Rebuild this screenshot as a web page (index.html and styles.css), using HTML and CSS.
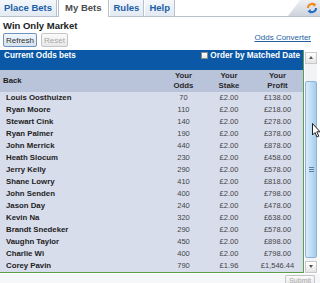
FILE: index.html
```html
<!DOCTYPE html>
<html lang="en">
<head>
    <meta charset="UTF-8">
    <title>My Bets - Win Only Market</title>
    <link rel="stylesheet" href="styles.css">
</head>
<body>
    <div class="tabs">
        <a class="tab" href="#">Place Bets</a>
        <a class="tab active" href="#">My Bets</a>
        <a class="tab" href="#">Rules</a>
        <a class="tab" href="#">Help</a>
        <div class="corner">
            <svg class="reload" width="12" height="12" viewBox="0 0 12 12">
                <path d="M2 6 A4 4 0 0 1 8.5 2.8" fill="none" stroke="#f08a1c" stroke-width="2"/>
                <path d="M7 0.5 L10.5 2.5 L7.5 5 Z" fill="#f08a1c"/>
                <path d="M10 6 A4 4 0 0 1 3.5 9.2" fill="none" stroke="#1d6fc4" stroke-width="2"/>
                <path d="M5 11.5 L1.5 9.5 L4.5 7 Z" fill="#1d6fc4"/>
            </svg>
        </div>
    </div>

    <div class="market">
        <h1>Win Only Market</h1>
        <div class="controls">
            <button class="btn focus">Refresh</button>
            <button class="btn" disabled>Reset</button>
            <a class="converter" href="#">Odds Converter</a>
        </div>
    </div>

    <div class="bets">
        <div class="grid">
            <div class="title">
                <span>Current Odds bets</span>
                <label class="order"><span class="check"></span>Order by Matched Date</label>
            </div>
            <table class="bet-table">
                <thead>
                    <tr>
                        <th class="name">Back</th>
                        <th class="odds">Your<br>Odds</th>
                        <th class="stake">Your<br>Stake</th>
                        <th>Your<br>Profit</th>
                    </tr>
                </thead>
                <tbody>
                    <tr><td class="name">Louis Oosthuizen</td><td>70</td><td>£2.00</td><td>£138.00</td></tr>
                    <tr><td class="name">Ryan Moore</td><td>110</td><td>£2.00</td><td>£218.00</td></tr>
                    <tr><td class="name">Stewart Cink</td><td>140</td><td>£2.00</td><td>£278.00</td></tr>
                    <tr><td class="name">Ryan Palmer</td><td>190</td><td>£2.00</td><td>£378.00</td></tr>
                    <tr><td class="name">John Merrick</td><td>440</td><td>£2.00</td><td>£878.00</td></tr>
                    <tr><td class="name">Heath Slocum</td><td>230</td><td>£2.00</td><td>£458.00</td></tr>
                    <tr><td class="name">Jerry Kelly</td><td>290</td><td>£2.00</td><td>£578.00</td></tr>
                    <tr><td class="name">Shane Lowry</td><td>410</td><td>£2.00</td><td>£818.00</td></tr>
                    <tr><td class="name">John Senden</td><td>400</td><td>£2.00</td><td>£798.00</td></tr>
                    <tr><td class="name">Jason Day</td><td>240</td><td>£2.00</td><td>£478.00</td></tr>
                    <tr><td class="name">Kevin Na</td><td>320</td><td>£2.00</td><td>£638.00</td></tr>
                    <tr><td class="name">Brandt Snedeker</td><td>290</td><td>£2.00</td><td>£578.00</td></tr>
                    <tr><td class="name">Vaughn Taylor</td><td>450</td><td>£2.00</td><td>£898.00</td></tr>
                    <tr><td class="name">Charlie Wi</td><td>400</td><td>£2.00</td><td>£798.00</td></tr>
                    <tr><td class="name">Corey Pavin</td><td>790</td><td>£1.96</td><td>£1,546.44</td></tr>
                </tbody>
            </table>
        </div>
        <div class="scrollbar">
            <div class="arrow up"></div>
            <div class="track">
                <div class="thumb"><span class="grip"></span></div>
            </div>
            <div class="arrow down"></div>
        </div>
    </div>

    <div class="footer">
        <button class="btn submit" disabled>Submit</button>
    </div>

    <svg class="cursor" width="9" height="15" viewBox="0 0 9 15">
        <path d="M0.5 0.5 L0.5 12 L3 9.5 L5 14 L6.8 13.2 L4.8 8.8 L8 8.8 Z" fill="#fff" stroke="#222" stroke-width="1"/>
    </svg>
</body>
</html>
```

FILE: styles.css
```css
body {
    margin: 0;
    width: 320px;
    height: 283px;
    overflow: hidden;
    background-color: #fff;
    font-family: 'Liberation Sans', Arial, sans-serif;
    color: #333;
    position: relative;
}
.tabs {
    display: flex;
    height: 16px;
    border-bottom: 1px solid #b9c1cc;
}
.tab {
    display: block;
    padding: 0 4px;
    line-height: 16px;
    font-size: 9.5px;
    font-weight: bold;
    color: #1d5fa6;
    text-decoration: none;
    background: linear-gradient(#f4f7fb, #e3eaf3);
    border-right: 1px solid #b9c1cc;
    margin-right: 1px;
}
.tab.active {
    color: #4d4d4d;
    background: #fff;
    padding: 0 6px;
    height: 17px;
    border-left: 1px solid #b9c1cc;
}
.corner {
    margin-left: auto;
    width: 32px;
    height: 16px;
    position: relative;
    background: linear-gradient(#eef0f4, #cfd4dc);
    clip-path: polygon(12px 0, 100% 0, 100% 100%, 0 100%);
}
.reload {
    position: absolute;
    right: 2px;
    top: 2px;
}
.market {
    padding: 3px 3px 0;
    height: 30px;
}
h1 {
    margin: 0;
    font-size: 9.5px;
    line-height: 12px;
    color: #222;
}
.controls {
    display: flex;
    align-items: flex-start;
    gap: 4px;
    margin-top: 1px;
}
.btn {
    font-family: 'Liberation Sans', Arial, sans-serif;
    font-size: 8px;
    height: 14px;
    padding: 0 2px;
    color: #333;
    border: 1px solid #c4c4c4;
    border-radius: 2px;
    background: linear-gradient(#fbfbfb, #e8e8e8);
}
.btn.focus {
    border-color: #6f93bf;
    background: linear-gradient(#f2f7fc, #d6e2ef);
}
.btn:disabled {
    color: #a8a8a8;
}
.converter {
    margin-left: auto;
    margin-right: 6px;
    font-size: 8px;
    line-height: 10px;
    color: #245fa4;
}
.bets {
    display: flex;
    align-items: flex-start;
    height: 224px;
}
.grid {
    width: 303px;
    border-right: 1px solid #5c9e4c;
    border-bottom: 1px solid #5c9e4c;
    background-color: #d8ddec;
}
.title {
    display: flex;
    justify-content: space-between;
    height: 20px;
    padding: 1px 3px 0 4px;
    box-sizing: border-box;
    background-color: #0b58a6;
    color: #fff;
    font-size: 8.2px;
    font-weight: bold;
    line-height: 9px;
}
.order {
    display: flex;
    gap: 2px;
}
.check {
    width: 7px;
    height: 7px;
    background: linear-gradient(#fff, #e6e6e6);
    border: 1px solid #8a8a8a;
    box-sizing: border-box;
    margin-top: 1px;
}
.bet-table {
    width: 100%;
    border-collapse: collapse;
    font-size: 7.5px;
}
.bet-table th {
    background-color: #b9c3da;
    height: 22px;
    padding: 0;
    font-size: 7.8px;
    font-weight: bold;
    line-height: 10px;
    color: #2a2a2a;
    text-align: center;
}
.bet-table td {
    height: 12px;
    padding: 0;
    line-height: 12px;
    text-align: center;
    color: #444;
}
.bet-table .name {
    text-align: left;
    padding-left: 6px;
    width: 155px;
    font-size: 7.8px;
    font-weight: bold;
    color: #222;
}
.bet-table th.name {
    padding-left: 3px;
    width: 158px;
}
.bet-table .odds {
    width: 45px;
}
.bet-table .stake {
    width: 46px;
}
.scrollbar {
    display: flex;
    flex-direction: column;
    width: 12px;
    height: 221px;
    margin-left: 1px;
    margin-top: 2px;
}
.arrow {
    height: 10px;
    border: 1px solid #c9c9c9;
    background: linear-gradient(#fff, #e4e4e4);
    position: relative;
}
.arrow::after {
    content: '';
    position: absolute;
    left: 3px;
    top: 3px;
    border-left: 2.5px solid transparent;
    border-right: 2.5px solid transparent;
}
.arrow.up::after {
    border-bottom: 3px solid #555;
}
.arrow.down::after {
    border-top: 3px solid #555;
}
.track {
    flex: 1;
    background-color: #f2f3f5;
    padding: 17px 0 3px;
    display: flex;
}
.thumb {
    flex: 1;
    border: 1px solid #8fb3d6;
    border-radius: 2px;
    background: linear-gradient(90deg, #d9ecfa, #b9daf4 60%, #a8cdec);
    display: flex;
    align-items: center;
    justify-content: center;
}
.grip {
    width: 5px;
    height: 5px;
    background: repeating-linear-gradient(#5c7fa3 0 1px, transparent 1px 2px);
}
.footer {
    display: flex;
    justify-content: flex-end;
    padding: 1px 5px 0 0;
    background-color: #f6f7f9;
    height: 20px;
}
.btn.submit {
    height: 9px;
    font-size: 7px;
    line-height: 7px;
    padding: 0 3px;
    border-bottom: none;
    border-radius: 2px 2px 0 0;
}
.cursor {
    position: absolute;
    left: 312px;
    top: 123px;
}
```
